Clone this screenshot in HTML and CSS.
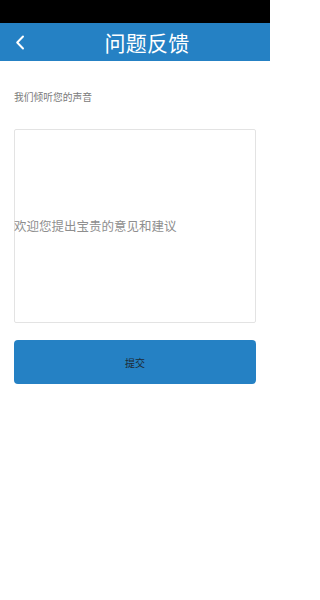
FILE: index.html
```html
<!DOCTYPE html>
<html lang="zh">
<head>
<meta charset="utf-8">
<title>问题反馈</title>
<link rel="stylesheet" href="styles.css">
</head>
<body>
<div class="status"></div>
<header class="bar">
  <span class="back">
    <svg width="10" height="15" viewBox="0 0 10 15"><path d="M8 1.5 L2.2 7.5 L8 13.5" fill="none" stroke="#fff" stroke-width="2" stroke-linecap="round" stroke-linejoin="round"/></svg>
  </span>
  <h1 class="title">问题反馈</h1>
</header>
<main class="content">
  <p class="hint">我们倾听您的声音</p>
  <div class="box">
    <span class="placeholder">欢迎您提出宝贵的意见和建议</span>
  </div>
  <button class="submit">提交</button>
</main>
</body>
</html>
```
FILE: styles.css
```css
* { box-sizing: border-box; }
html, body { margin: 0; padding: 0; background: #fff; }
body { font-family: "Noto Sans CJK SC", "Noto Sans", sans-serif; width: 270px; }
.status { height: 23px; background: #000; }
.bar {
  height: 38px;
  background: #2581c4;
  position: relative;
  display: flex;
  align-items: center;
  justify-content: center;
}
.back { position: absolute; left: 15px; top: 12px; display: flex; }
.title {
  margin: 0;
  color: #fff;
  font-size: 21px;
  font-weight: 400;
  line-height: 1;
  padding-left: 24px;
  letter-spacing: 0.3px;
}
.content { padding: 0 14px; }
.hint {
  margin: 29px 0 0;
  font-size: 9.75px;
  line-height: 14px;
  color: #7a7a7a;
}
.box {
  margin-top: 25px;
  height: 194px;
  border: 1px solid #e3e3e3;
  border-radius: 2px;
  display: flex;
  align-items: center;
  margin-left: 0;
}
.placeholder {
  margin-left: -1px;
  font-size: 12.5px;
  color: #8e8e8e;
  line-height: 1;
}
.submit {
  display: block;
  width: 100%;
  height: 44px;
  margin-top: 17px;
  border: none;
  border-radius: 4px;
  background: #2581c4;
  color: #1d2a36;
  font-family: "Noto Sans CJK SC", sans-serif;
  font-size: 10px;
  padding: 0;
}
```
